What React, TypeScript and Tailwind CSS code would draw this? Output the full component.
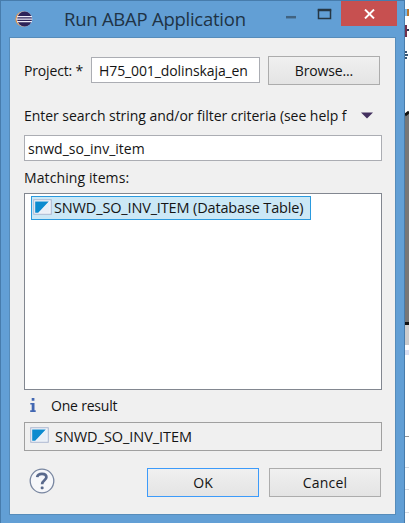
import React from "react";

function TableIcon() {
  return (
    <svg width="19" height="16" viewBox="0 0 19 16" className="-mt-[3px] block shrink-0">
      <rect x="0.75" y="0.75" width="17.5" height="14.5" fill="#f4f6fb" stroke="#a9b5cf" />
      <path d="M2.2 2.5H15.8L5.2 13.8H2.2Z" fill="#0c8bcf" />
      <path d="M16.6 2.8V13.8H6.4Z" fill="#e9eff7" />
    </svg>
  );
}

function EclipseIcon() {
  return (
    <svg width="18" height="18" viewBox="0 0 18 18" className="block">
      <circle cx="8" cy="9" r="7.6" fill="#e8953c" />
      <circle cx="9.3" cy="9" r="7.8" fill="#c9c4d8" />
      <circle cx="9.6" cy="9" r="7.4" fill="#2d2358" />
      <path d="M2 6.6H17M1.5 9.1H17.3M2 11.6H17" stroke="#eceaf6" strokeWidth="1.3" />
    </svg>
  );
}

function Btn({ children, primary = false }: { children: React.ReactNode; primary?: boolean }) {
  return (
    <button
      className={
        "flex h-[29px] w-[112px] items-center justify-center border bg-linear-to-b from-[#f0f0f0] to-[#e4e4e4] pt-px " +
        (primary ? "border-[#3d9bfa]" : "border-[#acacac]")
      }
    >
      {children}
    </button>
  );
}

export default function App() {
  return (
    <div className="relative flex h-[523px] w-[409px] overflow-hidden bg-white font-['Open_Sans','Noto_Sans',sans-serif] text-[14px] leading-[20px] text-[#141414]">
      <div className="flex h-full w-[405px] shrink-0 flex-col border-t border-r border-l border-[#477cac] bg-[#629fd5]">
        <header className="flex h-[36px] shrink-0 items-start pl-[14px]">
          <div className="pt-[9px]"><EclipseIcon /></div>
          <h1 className="mt-[6px] ml-[31px] w-[207px] text-[18.5px] leading-[24px] tracking-[-0.25px] whitespace-nowrap text-[#203345]">
            Run ABAP Application
          </h1>
          <svg width="60" height="30" className="ml-[14px] block shrink-0">
            <path d="M1 16.2H11" stroke="#416381" strokeWidth="2.5" />
            <path d="M33.5 9H45.5V17.5H33.5Z" fill="none" stroke="#263744" strokeWidth="1.5" />
            <path d="M32.8 9H46.2" stroke="#263744" strokeWidth="2.5" />
          </svg>
          <div className="-ml-[4px] flex h-[25px] w-[56px] items-center justify-center bg-[#c75050]">
            <svg width="11" height="10" viewBox="0 0 11 10" className="mt-px">
              <path d="M1 .6L10 9.4M10 .6L1 9.4" stroke="#fff" strokeWidth="2" />
            </svg>
          </div>
        </header>

        <main className="mr-[8px] ml-[8px] flex h-[478px] flex-col border border-[#568cba] bg-[#f0f0f0] px-[14px]">
          <div className="mt-[18px] flex h-[29px] items-center">
            <span className="w-[67px] pt-px tracking-[-0.15px] whitespace-nowrap">Project: *</span>
            <div className="-mt-px flex h-[26px] w-[169px] items-center border border-[#abadb3] bg-white pt-[2px] pl-[7px] tracking-[-0.1px] whitespace-nowrap">
              H75_001_dolinskaja_en
            </div>
            <div className="ml-[8px] tracking-[-0.15px]"><Btn>Browse...</Btn></div>
          </div>

          <div className="mt-[20px] flex h-[21px] items-center">
            <span className="w-[323px] overflow-hidden tracking-[-0.04px] whitespace-nowrap">
              Enter search string and/or filter criteria (see help f
            </span>
            <svg width="12" height="7" className="ml-[14px] block">
              <path d="M0 .4H12L6 6.6Z" fill="#43305f" />
            </svg>
          </div>

          <div className="mt-[9px] flex h-[26px] w-[358px] shrink-0 items-center border border-[#abadb3] bg-white pt-[2px] pl-[3px]">
            snwd_so_inv_item
          </div>

          <div className="mt-[7px] h-[20px] tracking-[0.1px]">Matching items:</div>

          <div className="mt-[5px] h-[197px] w-[358px] shrink-0 border border-[#828790] bg-white pt-[2px] pl-[6px]">
            <div className="flex h-[24px] w-[280px] items-center border border-[#2a9ade] bg-[#cbe8f6] pl-px text-[14.5px] tracking-[-0.15px] whitespace-nowrap">
              <TableIcon />
              <span className="ml-[2px]">SNWD_SO_INV_ITEM (Database Table)</span>
            </div>
          </div>

          <div className="mt-[6px] flex h-[20px] items-center">
            <svg width="6" height="14" viewBox="0 0 6 14" className="-mt-[2px] ml-[6px] block">
              <path d="M1.7 0H4.4V2.8H1.7ZM.3 5H4.5V12.3H5.7V14H.2V12.3H1.7V6.5H.3Z" fill="#4267b2" />
            </svg>
            <span className="ml-[15px] tracking-[-0.2px]">One result</span>
          </div>

          <div className="mt-[6px] flex h-[29px] w-[358px] shrink-0 items-center border border-[#a0a0a0] pl-[5px] text-[14.5px] tracking-[-0.05px]">
            <TableIcon />
            <span className="ml-[6px]">SNWD_SO_INV_ITEM</span>
          </div>

          <div className="mt-[17px] flex h-[29px] items-center">
            <svg width="26" height="26" viewBox="0 0 26 26" className="-mt-[4px] ml-[5px] block shrink-0">
              <circle cx="13" cy="13" r="11.8" fill="#f6f7fa" stroke="#7886a0" strokeWidth="1.3" />
              <path d="M8.2 9.2C8.5 6.9 10.2 5.8 13 5.8c2.8 0 4.4 1.3 4.4 3.4 0 3-4.3 3.1-4.3 7" fill="none" stroke="#59698c" strokeWidth="2.7" />
              <rect x="11.7" y="18.4" width="2.9" height="2.9" rx="1" fill="#59698c" />
            </svg>
            <div className="ml-[92px]"><Btn primary>OK</Btn></div>
            <div className="ml-[10px] tracking-[0.2px]"><Btn>Cancel</Btn></div>
          </div>
        </main>
      </div>

      <aside className="h-full w-[4px] shrink-0">
        <svg width="4" height="523" className="block">
          <rect width="4" height="112" fill="#fefefe" />
          <path d="M0 9H2V16H0Z" fill="#76b8ed" />
          <path d="M2 9H4V16H2Z" fill="#b87730" />
          <path d="M0 25H2V37H0Z" fill="#72304c" />
          <path d="M2 29H4V31H2Z" fill="#303650" />
          <path d="M0 51H2V53H0ZM0 54H3V56H0ZM0 57H2V59H0Z" fill="#395774" />
          <path d="M0 114L4 111V325H0Z" fill="#777" />
          <path d="M0 115L4 112" stroke="#111" strokeWidth="3" />
          <rect y="322" width="4" height="3" fill="#111" />
          <rect y="325" width="4" height="20" fill="#ccc" />
          <rect y="350" width="4" height="5" fill="#dce0f2" />
          <path d="M0 436.5H4" stroke="#999" />
          <path d="M0 467.5H4M0 489.5H4M0 512.5H4" stroke="#dadbe0" />
        </svg>
      </aside>
    </div>
  );
}
